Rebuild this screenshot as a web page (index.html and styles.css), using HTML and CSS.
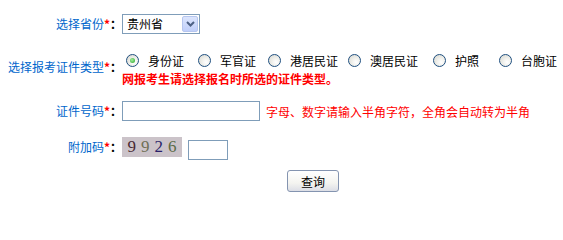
FILE: index.html
```html
<!DOCTYPE html>
<html lang="zh-CN">
<head>
<meta charset="utf-8">
<link rel="stylesheet" href="styles.css">
</head>
<body>
<div class="form">
  <div class="row row-prov">
    <div class="label">选择省份<span class="req">*</span><span class="colon">：</span></div>
    <div class="field">
      <div class="select"><span class="select-text">贵州省</span><span class="select-btn"><svg width="9" height="6" viewBox="0 0 9 6"><path d="M1 1 L4.5 4.5 L8 1" fill="none" stroke="#4d6185" stroke-width="2"/></svg></span></div>
    </div>
  </div>
  <div class="row row-type">
    <div class="label label-type">选择报考证件类型<span class="req">*</span><span class="colon">：</span></div>
    <div class="field">
      <div class="options">
        <label class="opt w1"><span class="radio checked"></span>身份证</label>
        <label class="opt w2"><span class="radio"></span>军官证</label>
        <label class="opt w3"><span class="radio"></span>港居民证</label>
        <label class="opt w4"><span class="radio"></span>澳居民证</label>
        <label class="opt w5"><span class="radio"></span>护照</label>
        <label class="opt"><span class="radio"></span>台胞证</label>
      </div>
      <div class="warn">网报考生请选择报名时所选的证件类型。</div>
    </div>
  </div>
  <div class="row row-id">
    <div class="label">证件号码<span class="req">*</span><span class="colon">：</span></div>
    <div class="field inline">
      <span class="input id-input"></span>
      <span class="hint">字母、数字请输入半角字符，全角会自动转为半角</span>
    </div>
  </div>
  <div class="row row-code">
    <div class="label">附加码<span class="req">*</span><span class="colon">：</span></div>
    <div class="field inline">
      <span class="captcha"><span class="d1">9</span><span class="d2">9</span><span class="d3">2</span><span class="d4">6</span></span>
      <span class="input code-input"></span>
    </div>
  </div>
  <div class="row row-btn">
    <div class="label"></div>
    <div class="field">
      <button class="btn" type="button">查询</button>
    </div>
  </div>
</div>
</body>
</html>
```
FILE: styles.css
```css
html, body {
  margin: 0;
  padding: 0;
  background: #ffffff;
}
body {
  font-family: "Noto Sans CJK SC", "DejaVu Sans", sans-serif;
  font-size: 12px;
  color: #000;
  width: 563px;
  height: 200px;
  overflow: hidden;
}
.form {
  display: flex;
  flex-direction: column;
  padding-top: 14px;
}
.row {
  display: grid;
  grid-template-columns: 122px 1fr;
  align-items: center;
}
.label {
  text-align: right;
  color: #0066cc;
  line-height: 16px;
  white-space: nowrap;
}
.req {
  color: #ff0000;
  font-weight: bold;
}
.colon {
  color: #000;
  font-weight: bold;
}
.row-prov { height: 20px; }
.row-type { margin-top: 16px; }
.row-id { margin-top: 14px; height: 20px; }
.row-code { margin-top: 13px; height: 23px; }
.row-btn { margin-top: 13px; }

.label-type { padding-bottom: 4px; }

.field.inline {
  display: flex;
  align-items: center;
}

/* select */
.select {
  box-sizing: border-box;
  width: 78px;
  height: 20px;
  border: 1px solid #7f9db9;
  display: flex;
  align-items: center;
  justify-content: space-between;
  padding: 1px;
}
.select-text {
  padding-left: 3px;
  line-height: 16px;
}
.select-btn {
  box-sizing: border-box;
  width: 16px;
  height: 16px;
  border: 1px solid #b6c6ef;
  border-radius: 2px;
  background: linear-gradient(#dce5fd, #c0cffa);
  display: flex;
  align-items: center;
  justify-content: center;
}

/* radios */
.options {
  display: flex;
  align-items: center;
  height: 20px;
}
.opt {
  display: flex;
  align-items: center;
  white-space: nowrap;
}
.w1 { width: 72px; }
.w2 { width: 70px; }
.w3 { width: 80px; }
.w4 { width: 85px; }
.w5 { width: 66px; }
.radio {
  box-sizing: border-box;
  width: 13px;
  height: 13px;
  border-radius: 50%;
  border: 1px solid #1f4f7f;
  background: radial-gradient(circle at 65% 65%, #ffffff 0%, #f2f2ee 35%, #d4d4cc 100%);
  margin: 0 9px 0 4px;
  position: relative;
}
.radio.checked::after {
  content: "";
  position: absolute;
  left: 3px;
  top: 3px;
  width: 5px;
  height: 5px;
  border-radius: 50%;
  background: radial-gradient(circle at 40% 40%, #a6f0a0, #21a121);
}
.warn {
  color: #ff0000;
  font-weight: bold;
  line-height: 16px;
  margin-top: 1px;
}

/* inputs */
.input {
  box-sizing: border-box;
  display: inline-block;
  height: 20px;
  border: 1px solid #7f9db9;
  background: #fff;
}
.id-input { width: 138px; }
.hint {
  color: #ff0000;
  margin-left: 6px;
  white-space: nowrap;
}
.code-input {
  width: 40px;
  margin-left: 6px;
  margin-top: 6px;
}

/* captcha */
.captcha {
  box-sizing: border-box;
  width: 60px;
  height: 20px;
  background: #cbc3c9;
  display: flex;
  align-items: center;
  justify-content: center;
  gap: 5px;
  font-family: "Liberation Serif", "DejaVu Serif", serif;
  font-size: 17px;
  line-height: 20px;
}
.d1 { color: #4a2a35; }
.d2 { color: #6f6f56; }
.d3 { color: #2a1f6a; }
.d4 { color: #5a6a45; }

/* button */
.btn {
  box-sizing: border-box;
  margin-left: 165px;
  width: 52px;
  height: 22px;
  border: 1px solid #8494b0;
  border-radius: 3px;
  background: linear-gradient(#ffffff 0%, #f4f4f0 60%, #dcdee6 100%);
  font-family: "Noto Sans CJK SC", sans-serif;
  font-size: 12px;
  color: #000;
  padding: 0;
  display: block;
}
```
